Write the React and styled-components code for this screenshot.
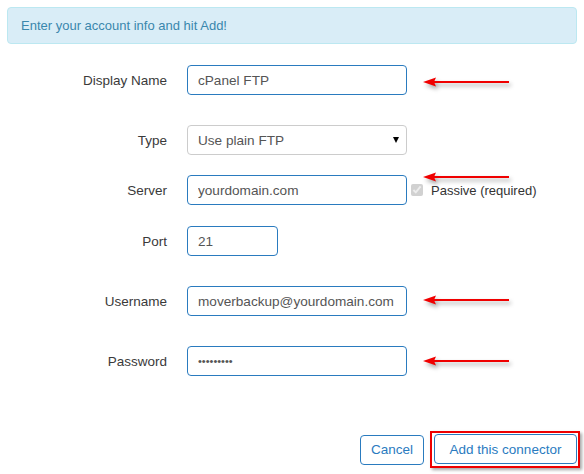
import React from "react";
import styled, { createGlobalStyle } from "styled-components";

const GlobalStyle = createGlobalStyle`
  html, body {
    margin: 0;
    padding: 0;
    background: #fff;
  }
  body {
    font-family: "Liberation Sans", Arial, sans-serif;
    color: #333;
  }
`;

const Page = styled.div`
  width: 570px;
  padding: 7px;
`;

const Alert = styled.div`
  box-sizing: border-box;
  height: 37px;
  padding: 0 13px;
  display: flex;
  align-items: center;
  background: #d9edf7;
  border: 1px solid #bce8f1;
  border-radius: 4px;
  color: #3a87ad;
  font-size: 13px;
`;

const Form = styled.form`
  margin: 0;
`;

const Row = styled.div`
  position: relative;
  display: grid;
  grid-template-columns: 180px 1fr;
  align-items: center;
  height: 30px;
  margin-top: ${(p) => p.gap}px;
`;

const Label = styled.label`
  text-align: right;
  padding-right: 20px;
  font-size: 13.5px;
  color: #3a3a3a;
`;

const Field = styled.div`
  display: flex;
  align-items: center;
  height: 30px;
  gap: 4px;
`;

const Input = styled.input`
  box-sizing: border-box;
  width: ${(p) => p.w || 220}px;
  height: 30px;
  padding: 0 10px;
  border: 1px solid #2a7bbf;
  border-radius: 4px;
  font-family: "Liberation Sans", Arial, sans-serif;
  font-size: ${(p) => (p.type === "password" ? 11 : 13.6)}px;
  color: #555;
  outline: none;
  background: #fff;
`;

const SelectWrap = styled.div`
  position: relative;
  width: 220px;
  height: 30px;
`;

const Select = styled.select`
  box-sizing: border-box;
  width: 220px;
  height: 30px;
  padding: 0 10px;
  border: 1px solid #ccc;
  border-radius: 4px;
  appearance: none;
  background: #fff;
  font-family: "Liberation Sans", Arial, sans-serif;
  font-size: 13.6px;
  color: #555;
  outline: none;
`;

const Caret = styled.span`
  position: absolute;
  right: 8px;
  top: 12px;
  width: 0;
  height: 0;
  border-left: 3.5px solid transparent;
  border-right: 3.5px solid transparent;
  border-top: 6px solid #000;
  pointer-events: none;
`;

const Check = styled.input`
  margin: 0;
  width: 12px;
  height: 12px;
  accent-color: #bbb;
`;

const CheckText = styled.span`
  font-size: 13px;
  color: #333;
  margin-left: 4px;
`;

const Arrow = styled.svg`
  position: absolute;
  left: 416px;
  top: ${(p) => p.top}px;
  overflow: visible;
  filter: drop-shadow(2px 3px 2px rgba(0, 0, 0, 0.35));
`;

const Actions = styled.div`
  display: flex;
  justify-content: flex-end;
  align-items: center;
  gap: 6px;
  margin-top: 55px;
`;

const Button = styled.button`
  box-sizing: border-box;
  width: ${(p) => p.w}px;
  height: 30px;
  padding: 0;
  background: #fff;
  border: 1px solid #2a7bbf;
  border-radius: 4px;
  color: #2a7bbf;
  font-family: "Liberation Sans", Arial, sans-serif;
  font-size: 13.5px;
  cursor: pointer;
`;

const Highlight = styled.span`
  display: inline-flex;
  padding: 1px 1px 2px 2px;
  margin-right: -3px;
  border: 2px solid #ee0000;
  box-shadow: 2px 2px 3px rgba(0, 0, 0, 0.35);
`;

function RedArrow({ top }) {
  return (
    <Arrow top={top} width="86" height="12" viewBox="0 0 86 12">
      <line x1="10" y1="6" x2="86" y2="6" stroke="#f00000" strokeWidth="2" />
      <polygon points="0,6 13,1.5 11,6 13,10.5" fill="#f00000" />
    </Arrow>
  );
}

export default function App() {
  return (
    <Page>
      <GlobalStyle />
      <Alert>Enter your account info and hit Add!</Alert>
      <Form onSubmit={(e) => e.preventDefault()}>
        <Row gap={21}>
          <Label>Display Name</Label>
          <Field>
            <Input defaultValue="cPanel FTP" />
          </Field>
          <RedArrow top={11} />
        </Row>
        <Row gap={30}>
          <Label>Type</Label>
          <Field>
            <SelectWrap>
              <Select defaultValue="ftp">
                <option value="ftp">Use plain FTP</option>
                <option value="ftps">Use FTPS</option>
              </Select>
              <Caret />
            </SelectWrap>
          </Field>
        </Row>
        <Row gap={20}>
          <Label>Server</Label>
          <Field>
            <Input defaultValue="yourdomain.com" />
            <Check type="checkbox" checked disabled readOnly />
            <CheckText>Passive (required)</CheckText>
          </Field>
          <RedArrow top={-4} />
        </Row>
        <Row gap={21}>
          <Label>Port</Label>
          <Field>
            <Input w={91} defaultValue="21" />
          </Field>
        </Row>
        <Row gap={30}>
          <Label>Username</Label>
          <Field>
            <Input defaultValue="moverbackup@yourdomain.com" />
          </Field>
          <RedArrow top={8} />
        </Row>
        <Row gap={30}>
          <Label>Password</Label>
          <Field>
            <Input type="password" defaultValue="123456789" />
          </Field>
          <RedArrow top={9} />
        </Row>
        <Actions>
          <Button type="button" w={64}>Cancel</Button>
          <Highlight>
            <Button type="submit" w={143}>Add this connector</Button>
          </Highlight>
        </Actions>
      </Form>
    </Page>
  );
}
